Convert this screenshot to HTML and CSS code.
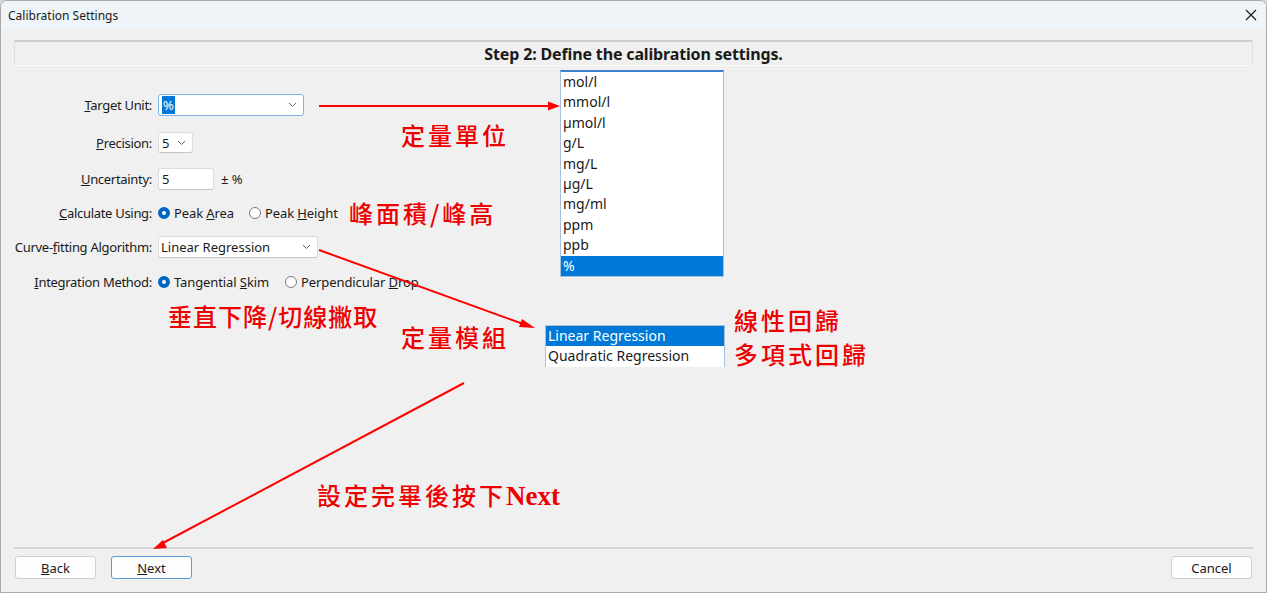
FILE: index.html
```html
<!DOCTYPE html>
<html lang="zh-Hant">
<head>
    <meta charset="UTF-8">
    <meta name="viewport" content="width=device-width, initial-scale=1.0">
    <title>Calibration Settings</title>
    <link rel="stylesheet" href="styles.css">
</head>
<body>
    <div class="window">
        <!-- Title bar -->
        <div class="titlebar">
            <span class="title">Calibration Settings</span>
            <svg class="close" width="12" height="12" viewBox="0 0 12 12">
                <path d="M1 1 L11 11 M11 1 L1 11" stroke="#1a1a1a" stroke-width="1.2" fill="none"/>
            </svg>
        </div>

        <div class="content">
            <div class="step-header">Step 2: Define the calibration settings.</div>

            <!-- Form -->
            <div class="form">
                <label><u>T</u>arget Unit:</label>
                <div class="field">
                    <div class="select select-unit focused">
                        <span class="selected-text">%</span>
                        <svg class="chevron" width="9" height="6" viewBox="0 0 9 6"><path d="M1 1 L4.5 4.5 L8 1" stroke="#666" stroke-width="1" fill="none"/></svg>
                    </div>
                </div>

                <label><u>P</u>recision:</label>
                <div class="field">
                    <div class="select select-precision">
                        <span>5</span>
                        <svg class="chevron" width="9" height="6" viewBox="0 0 9 6"><path d="M1 1 L4.5 4.5 L8 1" stroke="#666" stroke-width="1" fill="none"/></svg>
                    </div>
                </div>

                <label><u>U</u>ncertainty:</label>
                <div class="field">
                    <div class="textbox">5</div>
                    <span class="unit">± %</span>
                </div>

                <label><u>C</u>alculate Using:</label>
                <div class="field">
                    <span class="radio checked"></span><span class="radio-label">Peak <u>A</u>rea</span>
                    <span class="radio second"></span><span class="radio-label">Peak <u>H</u>eight</span>
                </div>

                <label>Curve-<u>f</u>itting Algorithm:</label>
                <div class="field">
                    <div class="select select-curve">
                        <span>Linear Regression</span>
                        <svg class="chevron" width="9" height="6" viewBox="0 0 9 6"><path d="M1 1 L4.5 4.5 L8 1" stroke="#666" stroke-width="1" fill="none"/></svg>
                    </div>
                </div>

                <label><u>I</u>ntegration Method:</label>
                <div class="field">
                    <span class="radio checked"></span><span class="radio-label">Tangential <u>S</u>kim</span>
                    <span class="radio third"></span><span class="radio-label">Perpendicular <u>D</u>rop</span>
                </div>
            </div>

            <!-- Buttons -->
            <div class="footer">
                <button class="btn"><u>B</u>ack</button>
                <button class="btn btn-default"><u>N</u>ext</button>
                <button class="btn btn-cancel">Cancel</button>
            </div>
        </div>

        <!-- Open dropdown lists -->
        <ul class="dropdown dropdown-unit">
            <li>mol/l</li>
            <li>mmol/l</li>
            <li>µmol/l</li>
            <li>g/L</li>
            <li>mg/L</li>
            <li>µg/L</li>
            <li>mg/ml</li>
            <li>ppm</li>
            <li>ppb</li>
            <li class="active">%</li>
        </ul>
        <ul class="dropdown dropdown-curve">
            <li class="active">Linear Regression</li>
            <li>Quadratic Regression</li>
        </ul>

        <!-- Annotations -->
        <svg class="arrows" width="1267" height="593" viewBox="0 0 1267 593">
            <g stroke="#f00" stroke-width="2" fill="#f00">
                <line x1="318" y1="105" x2="550" y2="105"/>
                <polygon points="559,105 547,100.5 547,109.5" stroke="none"/>
                <line x1="318" y1="249" x2="525" y2="324"/>
                <polygon points="534,327 521,318 518,326" stroke="none"/>
                <line x1="463" y1="382" x2="160" y2="543"/>
                <polygon points="152,548 162,539 166,547" stroke="none"/>
            </g>
        </svg>
        <span class="note note-unit">定量單位</span>
        <span class="note note-peak">峰面積/峰高</span>
        <span class="note note-drop">垂直下降/切線撇取</span>
        <span class="note note-model">定量模組</span>
        <span class="note note-linear">線性回歸</span>
        <span class="note note-poly">多項式回歸</span>
        <span class="note note-next">設定完畢後按下<b>Next</b></span>
    </div>
</body>
</html>
```

FILE: styles.css
```css
body {
    margin: 0;
    background-color: #d8d8d8;
    font-family: "Noto Sans", "Open Sans", sans-serif;
    font-size: 12px;
    color: #1a1a1a;
}

.window {
    position: relative;
    width: 1265px;
    height: 591px;
    background-color: #f0f0f0;
    border: 1px solid #a9a9a9;
    border-radius: 7px 7px 0 0;
    display: flex;
    flex-direction: column;
    overflow: hidden;
}

.titlebar {
    height: 28px;
    background-color: #eff4f9;
    display: flex;
    align-items: center;
    justify-content: space-between;
    padding: 0 9px 0 7px;
    flex-shrink: 0;
}

.title {
    font-size: 12px;
}

.close {
    display: block;
}

.content {
    flex: 1;
    display: flex;
    flex-direction: column;
    padding: 0 13px;
}

.step-header {
    margin-top: 11px;
    height: 23px;
    border-top: 2px solid #cfcfcf;
    border-left: 1px solid #e0e0e0;
    border-right: 1px solid #e0e0e0;
    border-bottom: 1px solid #fafafa;
    text-align: center;
    font-weight: bold;
    font-size: 16px;
    line-height: 25px;
    letter-spacing: -0.15px;
}

.form {
    margin-top: 20px;
    display: grid;
    grid-template-columns: 138px auto;
    grid-template-rows: 38px 37px 35px 34px 34px 35px;
    column-gap: 6px;
}

.form label {
    text-align: right;
    align-self: center;
    white-space: nowrap;
    font-size: 13px;
    letter-spacing: -0.3px;
}

.field {
    display: flex;
    align-items: center;
    white-space: nowrap;
}

.select, .textbox {
    box-sizing: border-box;
    height: 22px;
    background-color: #fff;
    border: 1px solid #dcdcdc;
    border-bottom-color: #c4c4c4;
    border-radius: 3px;
    display: flex;
    align-items: center;
    justify-content: space-between;
    padding: 0 6px 0 3px;
    font-size: 13px;
}

.select-unit {
    width: 146px;
}

.focused {
    border-color: #7fb2e5;
}

.selected-text {
    background-color: #0078d7;
    color: #fff;
    padding: 0 1px;
}

.select-precision {
    width: 35px;
    height: 21px;
}

.select-curve {
    width: 160px;
    padding-left: 2px;
}

.textbox {
    width: 56px;
    padding-left: 3px;
}

.unit {
    margin-left: 7px;
    font-size: 13px;
}

.radio {
    box-sizing: border-box;
    width: 12px;
    height: 12px;
    border: 1px solid #7a7a7a;
    border-radius: 50%;
    background-color: #fff;
    margin-left: 0;
    margin-right: 4px;
    flex-shrink: 0;
}

.radio.checked {
    border: 4px solid #0067c0;
}

.radio.second {
    margin-left: 15px;
}

.radio.third {
    margin-left: 16px;
}

.radio-label {
    font-size: 13px;
    letter-spacing: -0.1px;
}

.footer {
    margin-top: auto;
    border-top: 2px solid #d6d6d6;
    padding: 7px 1px 13px 1px;
    display: flex;
    gap: 15px;
}

.btn {
    box-sizing: border-box;
    width: 81px;
    height: 23px;
    background-color: #fdfdfd;
    border: 1px solid #d0d0d0;
    border-radius: 3px;
    font-family: "Noto Sans", "Open Sans", sans-serif;
    font-size: 13px;
    color: #1a1a1a;
    padding: 0;
}

.btn-default {
    border-color: #5b9bd9;
}

.btn-cancel {
    margin-left: auto;
}

.dropdown {
    position: absolute;
    margin: 0;
    padding: 0;
    list-style: none;
    background-color: #fff;
    border: 1px solid #a6c0de;
    font-size: 14px;
}

.dropdown li {
    height: 20.4px;
    line-height: 20px;
    padding-left: 2px;
}

.dropdown li.active {
    background-color: #0078d7;
    color: #fff;
}

.dropdown-unit {
    left: 559px;
    top: 69px;
    width: 162px;
    border-top: 2px solid #3c82d0;
}

.dropdown-curve {
    left: 544px;
    top: 324px;
    width: 178px;
    border-bottom: none;
}

.arrows {
    position: absolute;
    left: 0;
    top: 0;
    pointer-events: none;
}

.note {
    position: absolute;
    color: #ee0000;
    font-family: "Noto Sans CJK TC", sans-serif;
    font-weight: 500;
    font-size: 24px;
    letter-spacing: 3px;
    line-height: 28px;
    white-space: nowrap;
}

.note b {
    font-family: "Liberation Serif", serif;
    font-weight: bold;
    font-size: 27px;
    letter-spacing: 0;
}

.note-unit { left: 400px; top: 120px; }
.note-peak { left: 348px; top: 198px; }
.note-drop { left: 167px; top: 301px; letter-spacing: 1px; }
.note-model { left: 400px; top: 322px; }
.note-linear { left: 733px; top: 305px; }
.note-poly { left: 733px; top: 339px; }
.note-next { left: 316px; top: 480px; }
```
